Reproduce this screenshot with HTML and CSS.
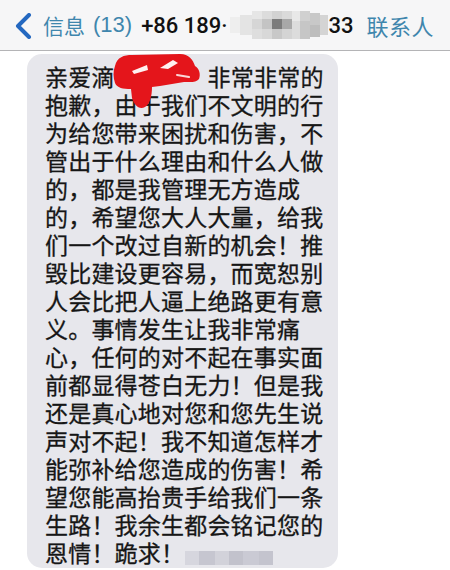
FILE: index.html
```html
<!DOCTYPE html>
<html lang="zh-CN">
<head>
<meta charset="utf-8">
<title>信息</title>
<link rel="stylesheet" href="styles.css">
</head>
<body>
<header class="nav">
  <svg class="chev" width="20" height="26" viewBox="0 0 20 26"><path d="M15,2 L4,13 L15,24" fill="none" stroke="#2468c0" stroke-width="4" stroke-linecap="round" stroke-linejoin="round"/></svg>
  <span class="back-label"><span class="cjk">信息</span><span class="count">(13)</span></span>
  <span class="title">+86 189·<svg class="blur" width="98" height="28" viewBox="0 0 98 28">
    <rect x="0" y="6" width="10" height="16" fill="#eeeeee"/>
    <rect x="10" y="4" width="12" height="20" fill="#e4e4e4"/>
    <rect x="22" y="0" width="10" height="8" fill="#e6e6e6"/>
    <rect x="22" y="8" width="10" height="10" fill="#d6d6d6"/>
    <rect x="22" y="18" width="10" height="10" fill="#dedede"/>
    <rect x="32" y="0" width="10" height="8" fill="#dcdcdc"/>
    <rect x="32" y="8" width="10" height="10" fill="#c4c4c4"/>
    <rect x="32" y="18" width="10" height="10" fill="#d8d8d8"/>
    <rect x="42" y="0" width="10" height="8" fill="#d2d2d2"/>
    <rect x="42" y="8" width="10" height="10" fill="#7c7c7c"/>
    <rect x="42" y="18" width="10" height="10" fill="#c8c8c8"/>
    <rect x="52" y="0" width="10" height="8" fill="#dadada"/>
    <rect x="52" y="8" width="10" height="10" fill="#a8a8a8"/>
    <rect x="52" y="18" width="10" height="10" fill="#d4d4d4"/>
    <rect x="62" y="0" width="8" height="10" fill="#e8e8e8"/>
    <rect x="62" y="10" width="8" height="18" fill="#dcdcdc"/>
    <rect x="70" y="0" width="10" height="10" fill="#d0d0d0"/>
    <rect x="70" y="10" width="10" height="18" fill="#c6c6c6"/>
    <rect x="80" y="2" width="10" height="12" fill="#c8c8c8"/>
    <rect x="80" y="14" width="10" height="12" fill="#bdbdbd"/>
    <rect x="90" y="4" width="8" height="20" fill="#d4d4d4"/>
  </svg>33</span>
  <span class="contact">联系人</span>
</header>
<main class="thread">
  <div class="bubble">
    <svg class="scribble" width="95" height="60" viewBox="0 0 95 60">
      <path d="M5,14 C7,5 14,3 22,3 L70,2 C79,2 83,8 85,14 C89,16 91,22 89,27 C86,31 80,30 74,30 C66,31 58,33 50,34 L42,35 C42,44 40,52 35,55 C29,58 24,53 22,46 L21,37 C13,37 7,36 5,31 C3,25 3,19 5,14 Z" fill="#e4151b"/>
      <path d="M22,19 L37,13 L38,18 L24,22 Z" fill="#fff0f0"/>
      <path d="M50,16 L63,8 L68,11 L58,17 Z" fill="#fff0f0"/>
      <path d="M67,23 L79,25" stroke="#fbd8d8" stroke-width="2" stroke-linecap="round" fill="none"/>
    </svg>
    <div class="line">亲爱滴<span class="hidden-name"></span>非常非常的</div>
    <div class="line">抱歉，由于我们不文明的行</div>
    <div class="line">为给您带来困扰和伤害，不</div>
    <div class="line">管出于什么理由和什么人做</div>
    <div class="line">的，都是我管理无方造成</div>
    <div class="line">的，希望您大人大量，给我</div>
    <div class="line">们一个改过自新的机会！推</div>
    <div class="line">毁比建设更容易，而宽恕别</div>
    <div class="line">人会比把人逼上绝路更有意</div>
    <div class="line">义。事情发生让我非常痛</div>
    <div class="line">心，任何的对不起在事实面</div>
    <div class="line">前都显得苍白无力！但是我</div>
    <div class="line">还是真心地对您和您先生说</div>
    <div class="line">声对不起！我不知道怎样才</div>
    <div class="line">能弥补给您造成的伤害！希</div>
    <div class="line">望您能高抬贵手给我们一条</div>
    <div class="line">生路！我余生都会铭记您的</div>
    <div class="line">恩情！跪求！<svg class="sig" width="88" height="14" viewBox="0 0 88 14">
      <rect x="0" y="0" width="14" height="14" fill="#d6d6de"/>
      <rect x="14" y="0" width="16" height="14" fill="#c6c6d0"/>
      <rect x="30" y="0" width="14" height="14" fill="#d2d2da"/>
      <rect x="44" y="0" width="14" height="14" fill="#c2c2cc"/>
      <rect x="58" y="0" width="16" height="14" fill="#cacad4"/>
      <rect x="74" y="0" width="14" height="14" fill="#c4c4ce"/>
    </svg></div>
  </div>
</main>
</body>
</html>
```
FILE: styles.css
```css
html, body {
  margin: 0;
  padding: 0;
}
body {
  width: 450px;
  height: 570px;
  overflow: hidden;
  background: #ffffff;
  font-family: "Liberation Sans", "Noto Sans CJK SC", sans-serif;
}
.nav {
  height: 51px;
  box-sizing: border-box;
  display: flex;
  align-items: center;
  padding-left: 14px;
  background: #f6f6f7;
  border-bottom: 1px solid #b4b4b6;
}
.chev {
  flex: none;
  margin-top: 1px;
}
.back-label {
  margin-left: 9px;
  display: flex;
  align-items: center;
  color: #3f86ad;
  white-space: nowrap;
}
.cjk {
  font-family: "Noto Sans CJK SC", sans-serif;
  font-size: 21px;
}
.count {
  margin-left: 8px;
  font-size: 22px;
}
.title {
  margin-left: 9px;
  display: flex;
  align-items: center;
  font-family: Roboto, "Liberation Sans", sans-serif;
  font-weight: 500;
  font-size: 22px;
  color: #111111;
  white-space: nowrap;
}
.blur {
  flex: none;
  margin: 0 1px 0 2px;
}
.contact {
  margin-left: 13px;
  font-family: "Noto Sans CJK SC", sans-serif;
  font-size: 22px;
  letter-spacing: 0.5px;
  color: #3f86ad;
  white-space: nowrap;
}
.thread {
  padding: 3px 0 0 27px;
}
.bubble {
  position: relative;
  width: 311px;
  box-sizing: border-box;
  padding: 8px 0 2px 18px;
  background: #e7e7ec;
  border-radius: 15px;
  font-family: "Noto Sans CJK SC", sans-serif;
  font-size: 23px;
  letter-spacing: 0.2px;
  line-height: 28px;
  color: #161616;
  -webkit-text-stroke: 0.3px #161616;
}
.line {
  white-space: nowrap;
}
.hidden-name {
  display: inline-block;
  width: 93px;
}
.scribble {
  position: absolute;
  left: 83px;
  top: -2px;
}
.sig {
  vertical-align: -3px;
  margin-left: 1px;
}
```
